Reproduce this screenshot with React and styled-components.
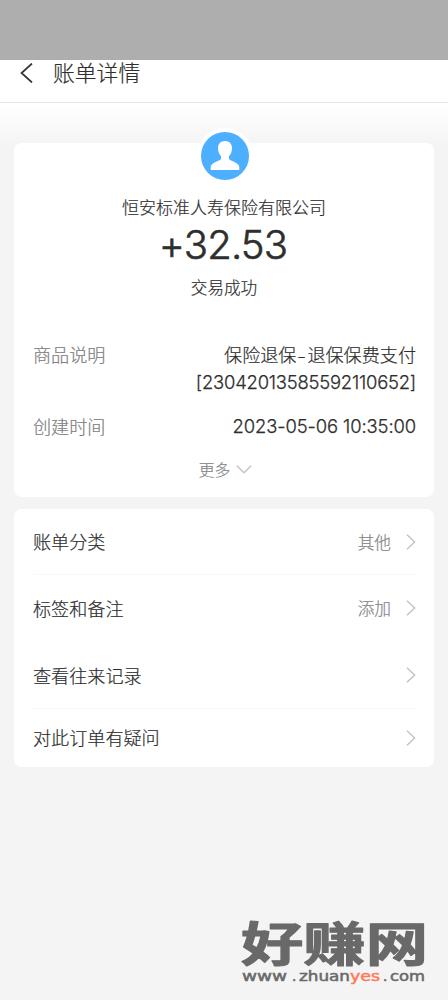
import styled, { createGlobalStyle } from "styled-components";

const GlobalStyle = createGlobalStyle`
  * {
    box-sizing: border-box;
  }

  body {
    margin: 0;
    background: #f4f4f4;
    color: #2e2e2e;
    font-family: "Noto Sans CJK SC", "Noto Sans", sans-serif;
    font-weight: 300;
    -webkit-text-stroke: 0.2px currentColor;
  }
`;

const Page = styled.div`
  display: flex;
  flex-direction: column;
  min-height: 1000px;
  background: linear-gradient(#fff 103px, #f4f4f4 146px);
`;

const StatusBar = styled.div`
  height: 60px;
  background: #aeaeae;
`;

const NavBar = styled.header`
  display: flex;
  align-items: flex-start;
  gap: 20px;
  height: 43px;
  padding: 0 20px;
  background: #fff;
  border-bottom: 1px solid #e6e6e6;
`;

const BackIcon = styled.svg`
  width: 13px;
  height: 20px;
  margin-top: 3px;
`;

const Title = styled.h1`
  margin: 0;
  font-size: 21.8px;
  font-weight: inherit;
  line-height: 24px;
`;

const Card = styled.section`
  display: flex;
  flex-direction: column;
  margin: 0 14px 12px;
  background: #fff;
  border-radius: 8px;
`;

const BillCard = styled(Card)`
  height: 354px;
  margin-top: 40px;
`;

const Summary = styled.div`
  display: flex;
  flex-direction: column;
  align-items: center;
  margin-top: -15px;
`;

const Avatar = styled.div`
  width: 56px;
  height: 56px;
  padding: 4px;
  margin-left: 2px;
  background: #fff;
  border-radius: 50%;
`;

const Merchant = styled.div`
  margin-top: 11px;
  font-size: 17px;
  line-height: 24px;
`;

const Amount = styled.div`
  margin-right: 2px;
  font-family: Inter, sans-serif;
  font-size: 40px;
  line-height: 52px;
  letter-spacing: -0.8px;
  -webkit-text-stroke: 0.6px currentColor;
`;

const Status = styled.div`
  margin-top: 4px;
  font-size: 16.6px;
  line-height: 24px;
`;

const Details = styled.dl`
  display: flex;
  flex-direction: column;
  gap: 17px;
  margin: 42px 18px 0 19px;
`;

const Detail = styled.div`
  display: flex;
  justify-content: space-between;
  font-size: 18.1px;
  line-height: 27.5px;
`;

const Label = styled.dt`
  color: #808080;
`;

const Value = styled.dd`
  margin: 0;
  text-align: right;
`;

const Dash = styled.span`
  display: inline-block;
  width: 11px;
  text-align: center;
  transform: scaleX(1.4);
`;

const Digits = styled.div`
  font-family: Inter, sans-serif;
  font-size: 18.4px;
  letter-spacing: ${({ $spacing }) => $spacing}px;
  -webkit-text-stroke: 0.25px currentColor;
`;

const More = styled.div`
  display: flex;
  justify-content: center;
  align-items: center;
  gap: 6px;
  margin-top: 17px;
  padding-left: 3px;
  color: #858585;
  font-size: 15.8px;
  line-height: 24px;
`;

const Row = styled.div`
  display: flex;
  align-items: center;
  height: ${({ $height }) => $height}px;
  margin: 0 18px 0 19px;
  border-bottom: 1px solid ${({ $divider }) => ($divider ? "#f8f8f8" : "transparent")};
`;

const RowName = styled.span`
  flex: 1;
  padding-bottom: 1px;
  font-size: 18.1px;
`;

const RowExtra = styled.span`
  margin-right: 15px;
  color: #858585;
  font-size: 16.7px;
`;

const Watermark = styled.footer`
  display: flex;
  justify-content: flex-end;
  margin-top: auto;
  padding: 0 16px 8px 0;
`;

const rows = [
  { name: "账单分类", extra: "其他", height: 66, divider: true },
  { name: "标签和备注", extra: "添加", height: 67 },
  { name: "查看往来记录", height: 67, divider: true },
  { name: "对此订单有疑问", height: 58 },
];

const Chevron = () => (
  <svg width="10" height="16" viewBox="0 0 10 16" fill="none" stroke="#c4c4c4" strokeWidth="1.5">
    <path d="M1 0.8L8.6 8L1 15.2" />
  </svg>
);

const Logo = () => (
  <svg width="192" height="84" viewBox="0 0 192 84">
    <g transform="translate(0 10) scale(1 0.77)">
      <text
        x="1"
        y="56"
        textLength="187"
        lengthAdjust="spacingAndGlyphs"
        fontFamily="Noto Sans CJK SC, sans-serif"
        fontSize="60"
        fontWeight="700"
        fill="#696969"
        stroke="#696969"
        strokeWidth="1.4"
        strokeLinejoin="round"
      >
        好赚网
      </text>
    </g>
    <text
      y="73"
      fontFamily="DejaVu Sans, sans-serif"
      fontSize="13.5"
      fontWeight="400"
      fill="#696969"
      stroke="#696969"
      strokeWidth="0.5"
    >
      <tspan x="2" textLength="45" lengthAdjust="spacingAndGlyphs">www</tspan>
      <tspan x="52">.</tspan>
      <tspan x="59" textLength="51" lengthAdjust="spacingAndGlyphs">zhuan</tspan>
      <tspan x="110" textLength="30" lengthAdjust="spacingAndGlyphs" fill="#ff7a59" stroke="#ff7a59">yes</tspan>
      <tspan x="143">.</tspan>
      <tspan x="150" textLength="35" lengthAdjust="spacingAndGlyphs">com</tspan>
    </text>
  </svg>
);

const App = () => {
  return (
    <Page>
      <GlobalStyle />
      <StatusBar />
      <NavBar>
        <BackIcon viewBox="0 0 13 20" fill="none" stroke="#333" strokeWidth="1.7">
          <path d="M12 0.5L1.5 10L12 19.5" />
        </BackIcon>
        <Title>账单详情</Title>
      </NavBar>

      <BillCard>
        <Summary>
          <Avatar>
            <svg width="48" height="48" viewBox="0 0 48 48">
              <circle cx="24" cy="24" r="24" fill="#4dafff" />
              <path
                d="M24 9C28.3 9 31 11.8 31 16C31 19.5 30 22 28 24.2V27C30.5 29.7 38 30.5 38.3 35V38H9.7V35C10 30.5 17.5 29.7 20 27V24.2C18 22 17 19.5 17 16C17 11.8 19.7 9 24 9Z"
                fill="#fff"
              />
            </svg>
          </Avatar>
          <Merchant>恒安标准人寿保险有限公司</Merchant>
          <Amount>+32.53</Amount>
          <Status>交易成功</Status>
        </Summary>

        <Details>
          <Detail>
            <Label>商品说明</Label>
            <Value>
              保险退保<Dash>-</Dash>退保保费支付
              <Digits $spacing={-0.2}>[23042013585592110652]</Digits>
            </Value>
          </Detail>
          <Detail>
            <Label>创建时间</Label>
            <Value>
              <Digits $spacing={-0.1}>2023-05-06 10:35:00</Digits>
            </Value>
          </Detail>
        </Details>

        <More>
          更多
          <svg width="16" height="9" viewBox="0 0 16 9" fill="none" stroke="#c4c4c4" strokeWidth="1.5">
            <path d="M0.8 0.8L8 7.8L15.2 0.8" />
          </svg>
        </More>
      </BillCard>

      <Card>
        {rows.map((row) => (
          <Row key={row.name} $height={row.height} $divider={row.divider}>
            <RowName>{row.name}</RowName>
            {row.extra && <RowExtra>{row.extra}</RowExtra>}
            <Chevron />
          </Row>
        ))}
      </Card>

      <Watermark>
        <Logo />
      </Watermark>
    </Page>
  );
};

export default App;
